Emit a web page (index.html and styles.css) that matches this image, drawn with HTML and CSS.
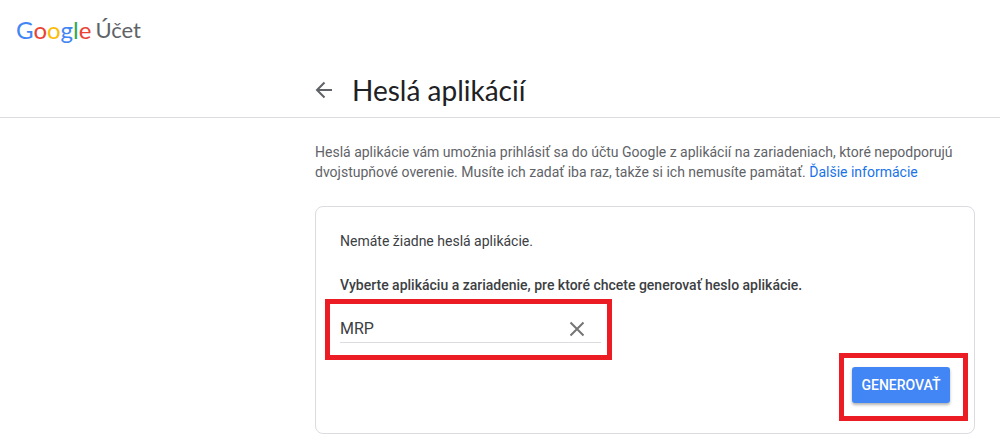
FILE: index.html
```html
<!DOCTYPE html>
<html lang="sk">
<head>
    <meta charset="UTF-8">
    <meta name="viewport" content="width=device-width, initial-scale=1.0">
    <title>Heslá aplikácií</title>
    <link rel="stylesheet" href="styles.css">
</head>
<body>
    <header class="header">
        <a class="logo" href="#"><span class="logo-name"><span class="blue">G</span><span class="red">o</span><span class="yellow">o</span><span class="blue">g</span><span class="green">l</span><span class="red">e</span></span><span class="logo-product">Účet</span></a>
    </header>
    <div class="title-bar">
        <div class="column title">
            <button class="icon-button" type="button" aria-label="Späť">
                <svg width="18" height="18" viewBox="0 0 18 18" fill="none" stroke="#5f6368" stroke-width="2">
                    <path d="M17 9H2.5M9.5 1.5L2 9l7.500 7.500"/>
                </svg>
            </button>
            <h1>Heslá aplikácií</h1>
        </div>
    </div>
    <main class="column">
        <p class="intro">Heslá aplikácie vám umožnia prihlásiť sa do účtu Google z aplikácií na zariadeniach, ktoré nepodporujú dvojstupňové overenie. Musíte ich zadať iba raz, takže si ich nemusíte pamätať. <a href="#">Ďalšie informácie</a></p>
        <form class="card">
            <p>Nemáte žiadne heslá aplikácie.</p>
            <label for="app-name">Vyberte aplikáciu a zariadenie, pre ktoré chcete generovať heslo aplikácie.</label>
            <div class="field marked">
                <input type="text" id="app-name" value="MRP">
                <button class="icon-button" type="button" aria-label="Vymazať">
                    <svg width="16" height="16" viewBox="0 0 16 16" fill="none" stroke="#757575" stroke-width="2">
                        <path d="M1.500 1.500l13 13M14.500 1.500l-13 13"/>
                    </svg>
                </button>
            </div>
            <div class="actions">
                <div class="marked">
                    <button class="generate" type="button">GENEROVAŤ</button>
                </div>
            </div>
        </form>
    </main>
</body>
</html>
```
FILE: styles.css
```css
* {
    box-sizing: border-box;
}
body {
    margin: 0;
    font-family: Roboto, "Liberation Sans", sans-serif;
    font-size: 14px;
    line-height: 20px;
    color: #3c4043;
    background-color: #fff;
}
h1, p {
    margin: 0;
}
a {
    color: #1a73e8;
    text-decoration: none;
}
.header {
    padding: 16px;
}
.logo {
    display: inline-flex;
    gap: 4px;
    font-family: Lato, sans-serif;
    font-size: 22px;
    line-height: 28px;
    color: #5f6368;
}
.logo-name {
    font-size: 24px;
}
.blue {
    color: #4285f4;
}
.red {
    color: #ea4335;
}
.yellow {
    color: #fbbc05;
}
.green {
    color: #34a853;
}
.column {
    max-width: 660px;
    margin: 0 25px 0 auto;
}
.title-bar {
    padding: 12px 0 9px;
    border-bottom: 1px solid #dadce0;
}
.title {
    display: flex;
    align-items: center;
    gap: 19px;
}
h1 {
    font-family: Lato, sans-serif;
    font-size: 28px;
    font-weight: 400;
    line-height: 36px;
    color: #202124;
}
.icon-button {
    display: flex;
    padding: 0;
    border: none;
    background: none;
    cursor: pointer;
}
.intro {
    padding: 24px 0;
    color: #5f6368;
}
.card {
    padding: 24px 24px 30px;
    border: 1px solid #dadce0;
    border-radius: 8px;
}
.card label {
    display: block;
    margin-top: 24px;
    font-weight: 500;
}
.marked {
    position: relative;
}
/* red frame around the steps to follow */
.marked::after {
    content: "";
    position: absolute;
    inset: -14px -18px -18px -13px;
    border: 5px solid #ec1c24;
    pointer-events: none;
}
.field {
    display: flex;
    align-items: center;
    max-width: 261px;
    margin-top: 20px;
    padding-right: 16px;
    border-bottom: 1px solid #dadce0;
}
.field::after {
    inset: -16px -11px -18px -15px;
}
.field input {
    flex: 1;
    min-width: 0;
    height: 27px;
    padding: 0;
    border: none;
    outline: none;
    font-family: inherit;
    font-size: 16px;
    color: #3c4043;
}
.actions {
    display: flex;
    justify-content: flex-end;
    margin-top: 24px;
}
.generate {
    display: block;
    min-width: 98px;
    height: 36px;
    padding: 0 8px;
    border: none;
    border-radius: 3px;
    font-family: inherit;
    font-size: 14px;
    font-weight: 500;
    color: #fff;
    background-color: #4285f4;
    box-shadow: 0 2px 3px rgba(0,0,0,0.3);
    cursor: pointer;
}
```
